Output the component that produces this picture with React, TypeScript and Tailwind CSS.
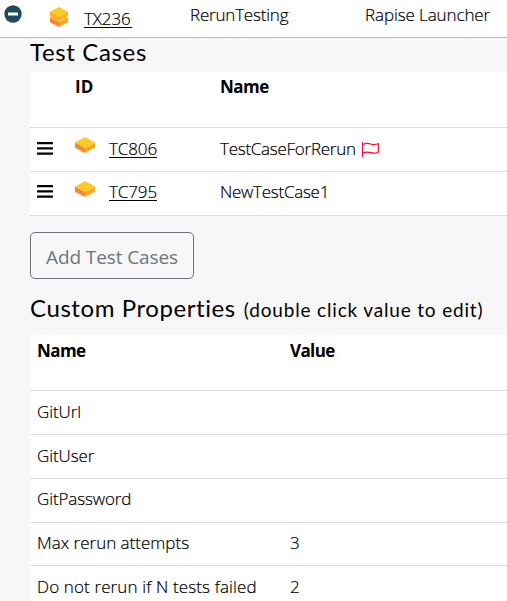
import React from "react";

const BODY = "font-['Open_Sans','Noto_Sans',sans-serif]";
const HEAD = "font-['Lato','Open_Sans',sans-serif]";
const LIGHT = "font-light [-webkit-text-stroke:0.2px_black]";

function Brick({ className }: { className: string }) {
  return (
    <svg className={className} width="20" height="16" viewBox="0 0 20 16">
      <path d="M0 5.5 10 11v5L0 10.7z" fill="#f58634" />
      <path d="M20 5.5 10 11v5l10-5.3z" fill="#f8a72b" />
      <path d="M10 0l10 5.5L10 11 0 5.5z" fill="#fdca26" />
    </svg>
  );
}

function BrickStack() {
  return (
    <svg className="ml-px mt-[7px] shrink-0" width="18" height="20" viewBox="0 0 18 20">
      <path d="M0 10.3 9 15v5l-9-4.8z" fill="#f58634" />
      <path d="M18 10.3 9 15v5l9-4.8z" fill="#f8a72b" />
      <path d="M0 10.3 3 9l6 3.2L15 9l3 1.3L9 15z" fill="#fdc526" />
      <path d="M0 4.8 9 9.5v4.7L0 9.3z" fill="#fba92b" />
      <path d="M18 4.8 9 9.5v4.7l9-4.900z" fill="#fcb52a" />
      <path d="M9 0l9 4.8-9 4.9-9-4.9z" fill="#fdca26" />
    </svg>
  );
}

function Flag() {
  return (
    <svg className="ml-[5px] mt-[14px]" width="18" height="16" viewBox="0 0 18 16" fill="none">
      <path d="M1.500 0v15" stroke="#ff0066" strokeWidth="1.2" />
      <path d="M2 2.500C5 1 7 1.200 9.500 2s4.500 1 7.800-.2v8.400c-3.300 1.200-5.300 1.200-7.800.4s-4.500-1-7.500.3" stroke="#ff0a28" strokeWidth="1.2" />
    </svg>
  );
}

interface CaseRowProps {
  id: string;
  name: string;
  flagged?: boolean;
  textTop: string;
  iconTop: string;
}

function CaseRow({ id, name, flagged, textTop, iconTop }: CaseRowProps) {
  return (
    <div className={`flex h-[44px] border-b border-[#dcdcdc] ${LIGHT}`}>
      <div className={`w-[45px] pl-[7px] ${iconTop}`}>
        <svg width="16" height="13" viewBox="0 0 16 13" fill="#000">
          <rect width="16" height="2.300" y="0" rx=".4" />
          <rect width="16" height="2.300" y="5.200" rx=".4" />
          <rect width="16" height="2.300" y="10.400" rx=".4" />
        </svg>
      </div>
      <div className="w-[34px]"><Brick className="mt-[9px]" /></div>
      <div className={`w-[111px] ${textTop}`}>
        <span className="inline-block h-[21px] w-[48px] border-b border-black tracking-[-0.1px]">{id}</span>
      </div>
      <span className={`${textTop} tracking-[-0.26px]`}>{name}</span>
      {flagged && <Flag />}
    </div>
  );
}

const properties = [
  { name: "GitUrl", value: "", style: "h-[44px] pt-[9px] tracking-[-0.1px]" },
  { name: "GitUser", value: "", style: "h-[44px] pt-[9px] tracking-[-0.1px]" },
  { name: "GitPassword", value: "", style: "h-[44px] pt-[8px] tracking-[-0.12px]" },
  { name: "Max rerun attempts", value: "3", style: "h-[43px] pt-[8px]" },
  { name: "Do not rerun if N tests failed", value: "2", style: "h-[44px] pt-[9px] tracking-[0.13px]" },
];

export default function App() {
  return (
    <div className={`h-[601px] w-full overflow-hidden whitespace-nowrap bg-[#f7f7f7] text-[17px] leading-6 text-black ${BODY}`}>
      <div className={`flex h-[38px] border-b border-[#bababa] bg-white ${LIGHT}`}>
        <div className="w-[49px] pl-1 pt-[5px]">
          <svg width="18" height="18" viewBox="0 0 18 18">
            <circle cx="9" cy="9" r="8.700" fill="#214b5b" />
            <rect x="4" y="7.500" width="10" height="3" rx=".5" fill="#fff" />
          </svg>
        </div>
        <div className="w-[35px]"><BrickStack /></div>
        <div className="w-[106px] pt-[7px]">
          <span className="inline-block h-[21px] w-[48px] border-b border-black tracking-[-0.1px]">TX236</span>
        </div>
        <span className="w-[175px] pt-[3px] tracking-[-0.2px]">RerunTesting</span>
        <span className="pt-[3px] tracking-[-0.1px]">Rapise Launcher</span>
      </div>
      <h2 className={`h-[34px] pl-[30px] text-[24px] font-normal leading-[28px] tracking-[0.65px] ${HEAD}`}>Test Cases</h2>
      <section className="ml-[30px] bg-white">
        <div className="flex h-[56px] border-b border-[#dcdcdc] pl-[45px] pt-[3px] font-bold">
          <span className="w-[145px]">ID</span>
          <span className="tracking-[-0.5px]">Name</span>
        </div>
        <CaseRow id="TC806" name="TestCaseForRerun" flagged textTop="pt-[9px]" iconTop="pt-[14px]" />
        <CaseRow id="TC795" name="NewTestCase1" textTop="pt-[8px]" iconTop="pt-[13px]" />
      </section>
      <button className="ml-[30px] mt-4 block h-[47px] w-[164px] rounded-[5px] border border-[#6c757d] pt-[2px] text-[19px] font-normal tracking-[-0.1px] text-[#6c757d]">Add Test Cases</button>
      <h2 className={`flex h-[56px] items-baseline pl-[30px] pt-[14px] text-[24px] font-normal leading-[30px] tracking-[0.58px] ${HEAD}`}>
        Custom Properties
        <small className="ml-2 text-[19px] tracking-[0.83px]">(double click value to edit)</small>
      </h2>
      <section className="ml-[30px] bg-white">
        <div className="flex h-[56px] border-b border-[#dcdcdc] pl-[7px] pt-1 font-bold tracking-[-0.6px]">
          <span className="w-[253px]">Name</span>
          <span>Value</span>
        </div>
        {properties.map((p) => (
          <div key={p.name} className={`flex border-b border-[#dcdcdc] pl-[7px] ${LIGHT} ${p.style}`}>
            <span className="w-[253px]">{p.name}</span>
            <span>{p.value}</span>
          </div>
        ))}
      </section>
    </div>
  );
}
